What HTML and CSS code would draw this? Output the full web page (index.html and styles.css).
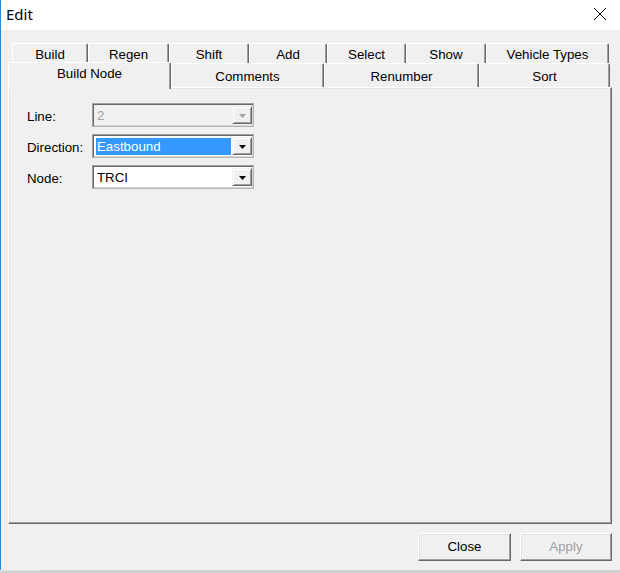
FILE: index.html
```html
<!DOCTYPE html>
<html>
<head>
<meta charset="utf-8">
<link rel="stylesheet" href="styles.css">
</head>
<body>
<div class="window">
  <div class="titlebar">
    <span class="title">Edit</span>
    <svg class="close-x" width="14" height="14" viewBox="0 0 14 14"><path d="M1 1 L13 13 M13 1 L1 13" stroke="#000" stroke-width="1" fill="none"/></svg>
  </div>
  <div class="client">
    <div class="tabrow row1">
      <div class="tab">Build</div>
      <div class="tab">Regen</div>
      <div class="tab">Shift</div>
      <div class="tab">Add</div>
      <div class="tab">Select</div>
      <div class="tab">Show</div>
      <div class="tab">Vehicle Types</div>
    </div>
    <div class="tabrow row2">
      <div class="tab selected">Build Node</div>
      <div class="tab">Comments</div>
      <div class="tab">Renumber</div>
      <div class="tab">Sort</div>
    </div>
    <div class="panel">
      <div class="form">
        <label class="lbl">Line:</label>
        <div class="combo disabled">
          <div class="value">2</div>
          <div class="arrow"><svg width="7" height="4" viewBox="0 0 7 4"><path d="M0 0 H7 L3.5 4 Z" fill="#a0a0a0"/></svg></div>
        </div>
        <label class="lbl">Direction:</label>
        <div class="combo">
          <div class="value highlight">Eastbound</div>
          <div class="arrow"><svg width="7" height="4" viewBox="0 0 7 4"><path d="M0 0 H7 L3.5 4 Z" fill="#000"/></svg></div>
        </div>
        <label class="lbl">Node:</label>
        <div class="combo">
          <div class="value">TRCI</div>
          <div class="arrow"><svg width="7" height="4" viewBox="0 0 7 4"><path d="M0 0 H7 L3.5 4 Z" fill="#000"/></svg></div>
        </div>
      </div>
    </div>
    <div class="buttons">
      <button class="btn">Close</button>
      <button class="btn disabled">Apply</button>
    </div>
  </div>
  <div class="bottom-strip"><span class="dots"></span></div>
</div>
</body>
</html>
```
FILE: styles.css
```css
html, body {
  margin: 0;
  padding: 0;
  background: #f0f0f0;
}
.window {
  width: 620px;
  height: 573px;
  overflow: hidden;
  font-family: "Liberation Sans", Arial, sans-serif;
  font-size: 13.3px;
  color: #000;
  display: flex;
  flex-direction: column;
}
.titlebar {
  height: 30px;
  flex: none;
  background: #fff;
  border-left: 1px solid #2b88d8;
  display: flex;
  align-items: center;
  justify-content: space-between;
  padding: 0 13px 0 5px;
}
.title {
  font-family: "Noto Sans", "Open Sans", sans-serif;
  font-size: 15px;
  line-height: 20px;
  margin-top: -3px;
}
.close-x {
  display: block;
  margin-top: -2px;
}
.client {
  flex: 1;
  background: #f0f0f0;
  border-left: 1px solid #2b88d8;
  padding: 13px 8px 0 7px;
  display: flex;
  flex-direction: column;
}
.tabrow {
  display: grid;
}
.row1 {
  margin-left: 4px;
  grid-template-columns: 76px 81px 80px 78px 79px 80px 123px;
  height: 20px;
}
.row2 {
  grid-template-columns: 163px 153px 155px 131px;
  height: 25px;
  position: relative;
  z-index: 1;
}
.tab {
  box-sizing: border-box;
  border-top: 1px solid #fff;
  border-left: 1px solid #fff;
  border-right: 1px solid #696969;
  box-shadow: inset -1px 0 0 #a0a0a0;
  border-radius: 2px 2px 0 0;
  background: #f0f0f0;
  text-align: center;
  white-space: nowrap;
}
.row1 .tab {
  height: 20px;
  line-height: 19px;
  padding-top: 1px;
}
.row2 .tab {
  height: 24px;
  line-height: 24px;
  padding-top: 1px;
  align-self: start;
}
.row2 .tab.selected {
  height: 27px;
  margin-top: -1px;
  line-height: 21px;
  padding-top: 0;
}
.panel {
  box-sizing: border-box;
  width: 604px;
  height: 437px;
  margin-top: -1px;
  border-top: 1px solid #fff;
  border-left: 1px solid #fff;
  border-right: 1px solid #696969;
  border-bottom: 1px solid #696969;
  box-shadow: inset -1px -1px 0 #a0a0a0, inset 1px 1px 0 #e3e3e3;
  padding: 15px 0 0 18px;
}
.form {
  display: grid;
  grid-template-columns: 65px 162px;
  row-gap: 7px;
  align-items: center;
}
.lbl {
  line-height: 16px;
  padding-top: 4px;
}
.combo {
  box-sizing: border-box;
  height: 24px;
  border: 1px solid #a0a0a0;
  border-right-color: #b4b4b4;
  border-bottom-color: #b4b4b4;
  box-shadow: inset 1px 1px 0 #696969, inset -1px -1px 0 #d6d6d6;
  background: #fff;
  display: flex;
  padding: 2px 1px 2px 3px;
}
.combo.disabled {
  background: #f0f0f0;
}
.value {
  flex: 1;
  line-height: 19px;
  padding-left: 1px;
  margin-right: 1px;
  white-space: nowrap;
}
.combo.disabled .value {
  color: #a0a0a0;
}
.value.highlight {
  background: #3399ff;
  color: #fff;
  line-height: 18px;
  height: 17px;
  margin-top: 1px;
}
.arrow {
  box-sizing: border-box;
  width: 20px;
  height: 18px;
  background: #f0f0f0;
  border-top: 1px solid #f0f0f0;
  border-left: 1px solid #f0f0f0;
  border-right: 1px solid #696969;
  border-bottom: 1px solid #696969;
  box-shadow: inset 1px 1px 0 #fff, inset -1px -1px 0 #a0a0a0;
  display: flex;
  align-items: center;
  justify-content: center;
}
.arrow svg {
  display: block;
  margin-top: 1px;
}
.buttons {
  display: flex;
  justify-content: flex-end;
  gap: 9px;
  margin-top: 9px;
}
.btn {
  box-sizing: border-box;
  width: 93px;
  height: 28px;
  margin: 0;
  padding: 0 0 1px 0;
  font-family: "Liberation Sans", Arial, sans-serif;
  font-size: 13.3px;
  color: #000;
  background: #f0f0f0;
  border-top: 1px solid #fff;
  border-left: 1px solid #fff;
  border-right: 1px solid #696969;
  border-bottom: 1px solid #696969;
  box-shadow: inset -1px -1px 0 #a0a0a0, inset 1px 1px 0 #e3e3e3;
  border-radius: 0;
}
.btn.disabled {
  width: 92px;
  color: #a0a0a0;
}
.bottom-strip {
  height: 3px;
  flex: none;
  background: #d2d2d2;
  display: flex;
}
.dots {
  width: 40px;
  height: 3px;
  border-top: 1px dotted #ececec;
  box-sizing: border-box;
}
```
